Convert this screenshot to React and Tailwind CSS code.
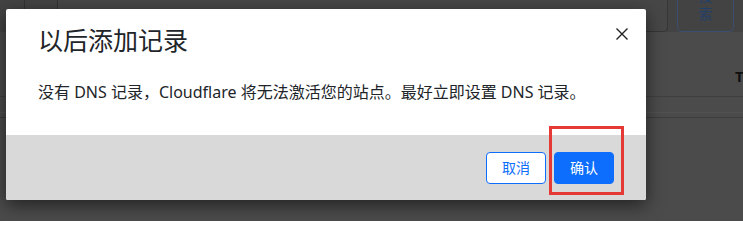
import React from "react";

export default function App() {
  return (
    <div
      className="relative h-[221px] w-[743px] overflow-hidden bg-[#4b4b4b]"
      style={{ fontFamily: '"Noto Sans", "Noto Sans CJK SC", sans-serif' }}
    >
      {/* dimmed page behind the dialog */}
      <div className="flex h-[32px] items-stretch bg-[#434343]">
        <div className="w-[25px] border-r border-[#333]" />
        <div className="w-[33px] border-r border-[#333]" />
        <div className="flex-1 rounded-br-[5px] border-b border-r border-[#363636] bg-[#474747]" />
        <div className="ml-[9px] mr-[9px] flex w-[57px] flex-col items-center justify-end overflow-hidden rounded-b-[5px] border border-t-0 border-[#3b5070] pb-[8px] text-[14px] leading-[18px] text-[#22406a]">
          <span>搜</span>
          <span>索</span>
        </div>
      </div>
      <div className="mt-[37px] flex h-[14px] justify-end overflow-hidden">
        <span className="-mr-[9px] text-[15px] font-bold leading-[14px] text-[#111]">Ty</span>
      </div>
      <div className="mt-[13px] border-b border-[#3f3f3f]" />
      <div className="mt-[15px] border-b border-[#525252]" />
      <div className="mt-[4px] border-b border-[#3c3c3c]" />

      {/* dialog */}
      <div className="absolute left-[6px] top-[9px] w-[640px] overflow-hidden rounded-[2px] bg-white shadow-[0_5px_18px_rgba(0,0,0,0.55)]">
        <div className="flex items-start justify-between pl-8 pr-[18px] pt-[13px]">
          <h5 className="text-[25px] leading-[36px] text-[#212529]">以后添加记录</h5>
          <button className="mt-[6px] text-[#222]">
            <svg width="12" height="12" viewBox="0 0 12 12" fill="none" stroke="currentColor" strokeWidth="1.4">
              <path d="M0.5 0.5 L11.5 11.5 M11.5 0.5 L0.5 11.5" />
            </svg>
          </button>
        </div>
        <div className="px-8 pb-[31px] pt-[22px]">
          <p className="text-[16px] leading-[24px] text-[#212529]">
            没有 DNS 记录，Cloudflare 将无法激活您的站点。最好立即设置 DNS 记录。
          </p>
        </div>
        <div className="flex h-[65px] items-center justify-end gap-2 bg-[#d9d9d9] px-8">
          <button className="h-[32px] w-[60px] rounded-[4px] border border-[#0d6efd] bg-white text-[14px] text-[#0d6efd]">
            取消
          </button>
          <button className="h-[32px] w-[60px] rounded-[4px] border border-[#0d6efd] bg-[#0d6efd] text-[14px] text-white">
            确认
          </button>
        </div>
      </div>

      {/* annotation */}
      <div className="absolute left-[549px] top-[126px] h-[69px] w-[75px] border-[3px] border-[#e53935]" />
    </div>
  );
}
